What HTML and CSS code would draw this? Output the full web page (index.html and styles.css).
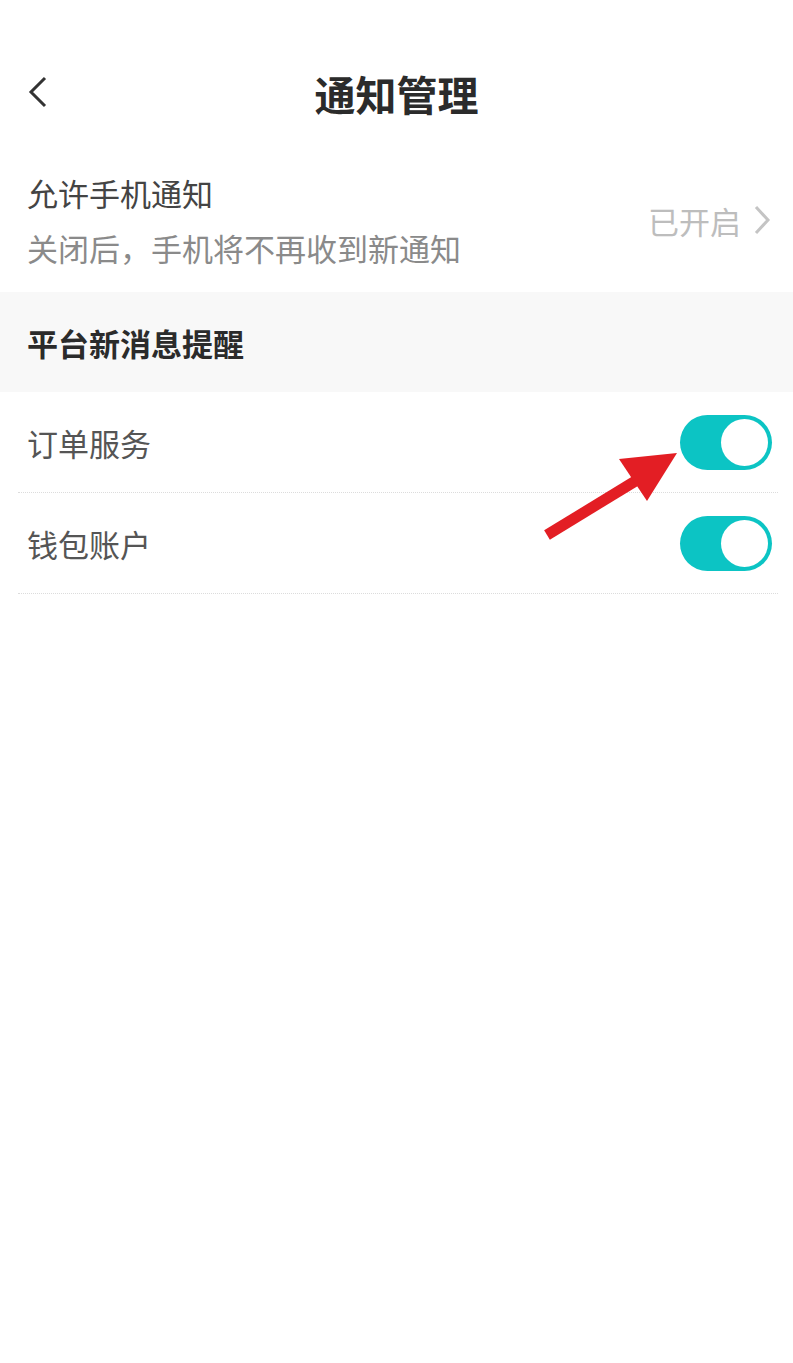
FILE: index.html
```html
<!DOCTYPE html>
<html lang="zh-CN">
<head>
    <meta charset="UTF-8">
    <meta name="viewport" content="width=device-width, initial-scale=1.0">
    <title>通知管理</title>
    <link rel="stylesheet" href="styles.css">
</head>
<body>
    <div class="page">
        <div class="navbar">
            <span class="back">
                <svg width="22" height="32" viewBox="0 0 22 32"><polyline points="18,2 4,16 18,30" fill="none" stroke="#333" stroke-width="3"/></svg>
            </span>
            <h1 class="title">通知管理</h1>
        </div>

        <div class="allow">
            <div class="allow-text">
                <div class="allow-title">允许手机通知</div>
                <div class="allow-desc">关闭后，手机将不再收到新通知</div>
            </div>
            <div class="allow-state">
                已开启
                <svg width="18" height="30" viewBox="0 0 18 30"><polyline points="3,2 15,15 3,28" fill="none" stroke="#c4c4c4" stroke-width="3"/></svg>
            </div>
        </div>

        <div class="section">平台新消息提醒</div>

        <div class="list">
            <div class="row">
                <span class="label">订单服务</span>
                <span class="switch on"><span class="knob"></span></span>
            </div>
            <div class="row">
                <span class="label">钱包账户</span>
                <span class="switch on"><span class="knob"></span></span>
            </div>
            <!-- annotation arrow -->
            <svg class="arrow" width="150" height="100" viewBox="0 0 150 100">
                <line x1="5" y1="86" x2="100" y2="28" stroke="#e31e24" stroke-width="11"/>
                <polygon points="135,4 77,10 105,52" fill="#e31e24"/>
            </svg>
        </div>
    </div>
</body>
</html>
```

FILE: styles.css
```css
* {
    box-sizing: border-box;
    margin: 0;
    padding: 0;
}

body {
    background-color: #fff;
    font-family: "Noto Sans CJK SC", "Noto Sans", sans-serif;
    color: #333;
}

.page {
    width: 793px;
}

.navbar {
    position: relative;
    height: 110px;
    margin-top: 38px;
    display: flex;
    align-items: center;
    justify-content: center;
}

.back {
    position: absolute;
    left: 27px;
    top: 38px;
    display: flex;
}

.title {
    font-size: 41px;
    font-weight: bold;
    color: #2b2b2b;
    line-height: 1;
}

.allow {
    display: flex;
    align-items: center;
    justify-content: space-between;
    padding: 0 22px 0 27px;
    height: 144px;
}

.allow-title {
    font-size: 31px;
    color: #444;
    line-height: 1;
    margin-bottom: 24px;
}

.allow-desc {
    font-size: 31px;
    color: #8a8a8a;
    line-height: 1;
}

.allow-state {
    display: flex;
    align-items: center;
    gap: 12px;
    font-size: 31px;
    color: #bdbdbd;
    line-height: 1;
}

.section {
    background-color: #f8f8f8;
    height: 100px;
    padding-left: 27px;
    display: flex;
    align-items: center;
    font-size: 31px;
    font-weight: bold;
    color: #2b2b2b;
}

.list {
    position: relative;
    padding: 0 15px 0 18px;
}

.row {
    display: flex;
    align-items: center;
    justify-content: space-between;
    height: 101px;
    padding: 0 6px 0 9px;
    border-bottom: 1px dotted #dcdcdc;
}

.label {
    font-size: 31px;
    color: #555;
    line-height: 1;
}

.switch {
    width: 92px;
    height: 55px;
    border-radius: 28px;
    background-color: #fff;
    position: relative;
    display: inline-block;
}

.switch.on {
    background-color: #0cc4c4;
}

.knob {
    position: absolute;
    top: 4px;
    right: 4px;
    width: 47px;
    height: 47px;
    border-radius: 50%;
    background-color: #fff;
}

.arrow {
    position: absolute;
    left: 542px;
    top: 57px;
}
```
